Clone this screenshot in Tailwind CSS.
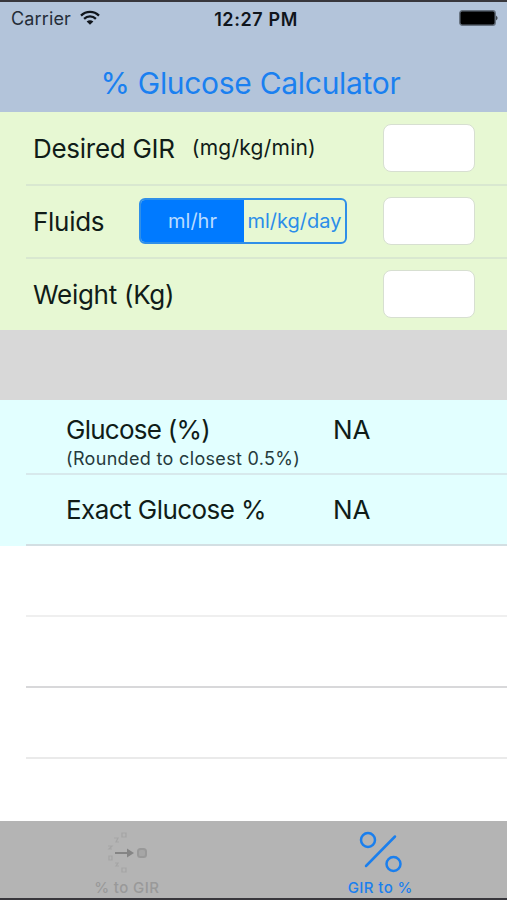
<!DOCTYPE html>
<html lang="en">
<head>
    <meta charset="UTF-8">
    <meta name="viewport" content="width=device-width, initial-scale=1.0">
    <title>% Glucose Calculator</title>
    <script src="https://cdn.jsdelivr.net/npm/@tailwindcss/browser@4"></script>
</head>
<body class="bg-white">
    <div class="flex flex-col w-[507px] h-[900px] overflow-hidden bg-white border-y-2 border-[#38373c] font-['Inter',sans-serif] text-[#101c18] whitespace-nowrap">
        <!-- Header -->
        <header class="h-[110px] shrink-0 bg-[#b3c4da]">
            <div class="grid grid-cols-3 items-center h-8 pl-[11px] pr-2">
                <div class="flex items-center gap-[9px]">
                    <span class="text-[18px] tracking-[0.15px] text-[#252d38]">Carrier</span>
                    <svg class="w-5 h-4" viewBox="0 0 20 16" fill="none" stroke="#10151c" stroke-width="2.3">
                        <path d="M1 5.6C6 .5 14 .5 19 5.6"/>
                        <path d="M4.1 8.9C7.4 5.6 12.6 5.6 15.9 8.9"/>
                        <path d="M10 14.8 6.6 11.6Q10 8.9 13.4 11.6Z" fill="#10151c" stroke="none"/>
                    </svg>
                </div>
                <span class="pt-[2px] pl-[2px] text-[18px] tracking-[0.6px] font-semibold text-center text-[#10151c]">12:27 PM</span>
                <svg class="w-10 h-4 justify-self-end" viewBox="0 0 40 16">
                    <rect x=".8" y=".8" width="35.4" height="14.4" rx="2.5" fill="#000" stroke="#65707e" stroke-width="1.4"/>
                    <path d="M37.3 5.5Q39.6 8 37.3 10.5Z" fill="#111"/>
                </svg>
            </div>
            <h1 class="mt-[27px] pr-[6px] text-[30px] leading-[44px] tracking-[-0.3px] text-center text-[#1a80f0]">% Glucose Calculator</h1>
        </header>

        <!-- Inputs -->
        <section class="shrink-0 bg-[#e7f8d3] text-[26px] tracking-[-0.28px]">
            <div class="ml-[26px] h-[74px] flex items-center pl-[7px] pr-8 border-b-2 border-[#d9e8d0]">
                <span>Desired GIR</span>
                <span class="ml-[17px] text-[21px] tracking-[0.25px]">(mg/kg/min)</span>
                <input type="text" class="ml-auto w-[92px] h-12 bg-white border border-[#d7dfd1] rounded-lg">
            </div>
            <div class="ml-[26px] h-[73px] flex items-center pl-[7px] pr-8 pb-px border-b-2 border-[#d9e8d0]">
                <span class="w-[106px]">Fluids</span>
                <div class="flex w-[208px] h-[46px] border-2 border-[#2f8fe8] rounded-md overflow-hidden text-[20px] tracking-normal">
                    <button class="w-[103px] bg-[#007aff] text-[#b9dcff]">ml/hr</button>
                    <button class="flex-1 text-[#2b8de9]">ml/kg/day</button>
                </div>
                <input type="text" class="ml-auto w-[92px] h-12 bg-white border border-[#d7dfd1] rounded-lg">
            </div>
            <div class="ml-[26px] h-[71px] flex items-center pl-[7px] pr-8 pb-px">
                <span>Weight (Kg)</span>
                <input type="text" class="ml-auto w-[92px] h-12 bg-white border border-[#d7dfd1] rounded-lg">
            </div>
        </section>

        <div class="h-[70px] shrink-0 bg-[#d8d8d8]"></div>

        <!-- Results -->
        <section class="shrink-0 bg-[#e2ffff] text-[26px]">
            <div class="ml-[26px] h-[75px] pl-10 pt-[14px] border-b-2 border-[#d7e9ec]">
                <div class="flex leading-8">
                    <span class="w-[267px] tracking-[-0.75px]">Glucose (%)</span>
                    <span>NA</span>
                </div>
                <div class="pt-px text-[18px] leading-6 tracking-[0.33px] text-[#263a3c]">(Rounded to closest 0.5%)</div>
            </div>
            <div class="ml-[26px] h-[71px] flex items-center pl-10 pb-px border-b-2 border-[#d3dfe3]">
                <span class="w-[267px] tracking-[-0.55px]">Exact Glucose %</span>
                <span>NA</span>
            </div>
        </section>

        <!-- Empty rows -->
        <div class="grow">
            <div class="ml-[26px] h-[71px] border-b-2 border-[#efefef]"></div>
            <div class="ml-[26px] h-[71px] border-b-2 border-[#d8d8da]"></div>
            <div class="ml-[26px] h-[71px] border-b-2 border-[#eaeaea]"></div>
        </div>

        <!-- Tab bar -->
        <nav class="grid grid-cols-2 h-[77px] shrink-0 bg-[#b4b4b4] text-[15px] leading-5 tracking-[0.4px] font-medium">
            <div class="flex flex-col items-center pt-2 text-[#999999]">
                <svg class="w-11 h-12 ml-1" viewBox="0 0 44 48" fill="none" stroke="#9f9f9f">
                    <path d="M8 24H22" stroke="#858585" stroke-width="2"/>
                    <path d="M20 19.5 27 24 20 28.5Z" fill="#858585" stroke="none"/>
                    <rect x="31" y="20" width="8" height="8" rx="2.5" fill="#a6a6a6" stroke="#999" stroke-width="2"/>
                    <g stroke="#a5a5a5" stroke-width="1.2">
                        <path d="M15 4h4v4h-4zM7 9h4l-2 4h3M1 17h4l-3 3h3M2 27h3v4H2zM8 34h3l-2 3h3M15 39h4v4h-4z"/>
                    </g>
                </svg>
                <span class="mt-px">% to GIR</span>
            </div>
            <div class="flex flex-col items-center pt-2 text-[#1a7fee]">
                <svg class="w-11 h-12" viewBox="0 0 44 48" fill="none" stroke="#1a7fee" stroke-width="2.5">
                    <circle cx="10" cy="11" r="7"/>
                    <circle cx="35.5" cy="35" r="7"/>
                    <path d="M8 37 37 7.5" stroke-linecap="round"/>
                </svg>
                <span class="mt-px">GIR to %</span>
            </div>
        </nav>
    </div>
</body>
</html>
